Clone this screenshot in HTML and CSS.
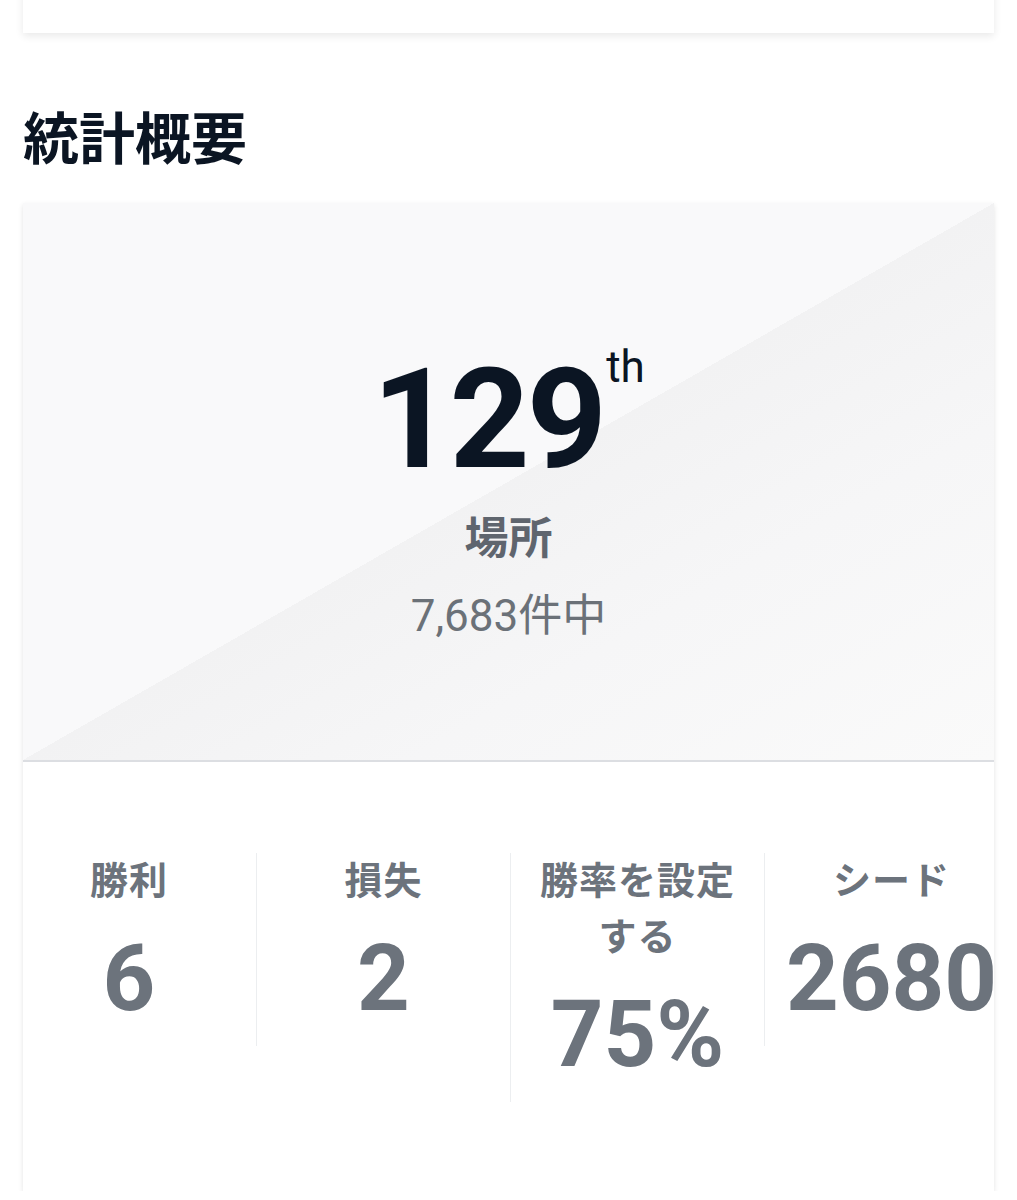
FILE: index.html
```html
<!DOCTYPE html>
<html lang="ja">
<head>
<meta charset="utf-8">
<title>統計概要</title>
<link rel="stylesheet" href="styles.css">
</head>
<body>
  <div class="card card-top"></div>

  <h2 class="section-title">統計概要</h2>

  <div class="card stats-card">
    <div class="rank">
      <div class="rank-number">129<sup class="rank-suffix">th</sup></div>
      <div class="rank-label">場所</div>
      <div class="rank-total">7,683件中</div>
    </div>
    <div class="stats-row">
      <div class="stat">
        <div class="stat-label">勝利</div>
        <div class="stat-value">6</div>
      </div>
      <div class="stat">
        <div class="stat-label">損失</div>
        <div class="stat-value">2</div>
      </div>
      <div class="stat">
        <div class="stat-label">勝率を設定する</div>
        <div class="stat-value">75%</div>
      </div>
      <div class="stat">
        <div class="stat-label">シード</div>
        <div class="stat-value">2680</div>
      </div>
    </div>
  </div>
</body>
</html>
```

FILE: styles.css
```css
* { box-sizing: border-box; }

html, body {
  margin: 0;
  padding: 0;
  background: #ffffff;
}

body {
  font-family: Roboto, "Noto Sans CJK JP", "Noto Sans", sans-serif;
  color: #0b1523;
  overflow-x: hidden;
}

.card {
  background: #ffffff;
  margin: 0 23px;
  box-shadow: 0 3px 8px rgba(0, 0, 0, 0.09);
}

.card-top {
  margin-top: -10px;
  height: 43px;
}

.section-title {
  margin: 74px 23px 29px;
  font-size: 56px;
  line-height: 1.2;
  font-weight: 700;
  color: #0b1523;
}

.stats-card {
  box-shadow: 0 2px 5px rgba(0, 0, 0, 0.11);
}

.rank {
  padding: 146px 0 116px;
  text-align: center;
  background: linear-gradient(to bottom right, #f9f9fa 0%, #f9f9fa 50%, #f2f2f3 50%, #f6f6f7 70%, #fafafa 100%);
  border-bottom: 2px solid #dcdee2;
}

.rank-number {
  font-size: 140px;
  line-height: 1;
  font-weight: 700;
  letter-spacing: -3px;
  color: #0b1523;
}

.rank-suffix {
  font-size: 44px;
  font-weight: 400;
  letter-spacing: 0;
  line-height: 0;
  vertical-align: 85px;
  margin-left: 2px;
}

.rank-label {
  margin-top: 22px;
  font-size: 44px;
  line-height: 57px;
  font-weight: 700;
  color: #5f656e;
}

.rank-total {
  margin-top: 21px;
  font-size: 44px;
  line-height: 55px;
  font-weight: 400;
  color: #6b7178;
}

.stats-row {
  display: flex;
  align-items: flex-start;
  margin-left: -21px;
  width: 1016px;
  padding: 91px 0 89px;
}

.stat {
  flex: 0 0 254px;
  padding: 0 20px 18px;
  text-align: center;
}

.stat + .stat {
  border-left: 1px solid #eceef0;
}

.stat-label {
  font-size: 38px;
  line-height: 56px;
  font-weight: 700;
  letter-spacing: 1px;
  color: #6c737c;
}

.stat-value {
  margin-top: 20px;
  font-size: 92px;
  line-height: 99px;
  font-weight: 700;
  color: #6c737c;
}
```
